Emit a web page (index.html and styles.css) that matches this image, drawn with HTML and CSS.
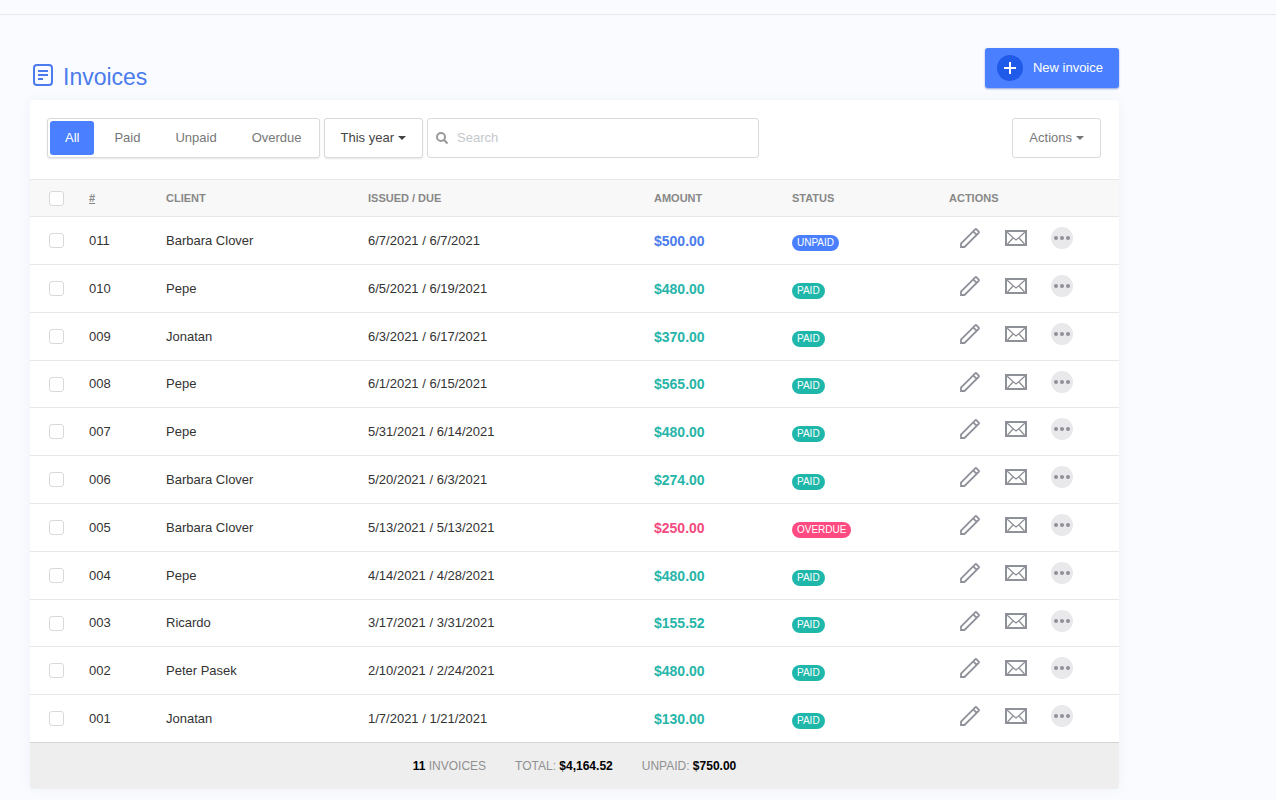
FILE: index.html
```html
<!DOCTYPE html>
<html lang="en">
<head>
<meta charset="utf-8">
<title>Invoices</title>
<link rel="stylesheet" href="styles.css">
</head>
<body>
<svg class="sprite" aria-hidden="true">
  <symbol id="i-pencil" viewBox="0 0 20 20">
    <path d="M1 19v-3.500L15.200 1.300a1 1 0 0 1 1.300 0L18.700 3.500a1 1 0 0 1 0 1.300L4.500 19zM13.200 3.300l3.500 3.500" fill="none" stroke="#8f9199" stroke-width="1.800"/>
  </symbol>
  <symbol id="i-mail" viewBox="0 0 22 16">
    <path d="M1 1h20v14H1z" fill="none" stroke="#8f9199" stroke-width="2"/>
    <path d="M2 2l6.500 6 2.500 2 2.500-2L20 2M2.500 14l5.500-6M19.500 14l-5.500-6" fill="none" stroke="#8f9199" stroke-width="1.300"/>
  </symbol>
  <symbol id="i-more" viewBox="0 0 22 22">
    <circle cx="11" cy="11" r="11" fill="#e9e9eb"/>
    <g fill="#8f9199"><circle cx="5" cy="11" r="2"/><circle cx="11" cy="11" r="2"/><circle cx="17" cy="11" r="2"/></g>
  </symbol>
</svg>
<header class="topbar"></header>
<main class="page">
  <div class="heading">
    <h1 class="title">
      <svg class="title-icon" viewBox="0 0 20 22" fill="none" stroke="#4b7bec" stroke-width="2" aria-hidden="true"><rect x="1" y="1" width="18" height="20" rx="3"/><path d="M5 7h10M5 11h10M5 15h5"/></svg>
      Invoices
    </h1>
    <button class="new-btn" type="button">
      <svg class="plus" viewBox="0 0 26 26" aria-hidden="true"><circle cx="13" cy="13" r="13" fill="#1f5ae8"/><path d="M13 7v12M7 13h12" stroke="#fff" stroke-width="2"/></svg>
      New invoice
    </button>
  </div>
  <section class="card">
    <div class="toolbar">
      <div class="tabs">
        <button class="tab tab-active" type="button">All</button>
        <button class="tab" type="button">Paid</button>
        <button class="tab" type="button">Unpaid</button>
        <button class="tab" type="button">Overdue</button>
      </div>
      <button class="drop drop-year" type="button">This year<span class="caret"></span></button>
      <label class="search">
        <svg class="search-icon" viewBox="0 0 12 12" fill="none" stroke="#999" stroke-width="2" aria-hidden="true"><circle cx="5" cy="5" r="4"/><path d="m8 8 3.500 3.500"/></svg>
        <input class="search-input" type="search" placeholder="Search" aria-label="Search">
      </label>
      <button class="drop drop-actions" type="button">Actions<span class="caret"></span></button>
    </div>
    <table class="invoices">
      <colgroup><col class="c-check"><col class="c-num"><col class="c-client"><col class="c-dates"><col class="c-amount"><col class="c-status"><col class="c-actions"></colgroup>
      <thead>
        <tr><th><input class="check" type="checkbox" aria-label="Select all"></th><th><a class="sort" href="#">#</a></th><th>CLIENT</th><th>ISSUED / DUE</th><th>AMOUNT</th><th>STATUS</th><th>ACTIONS</th></tr>
      </thead>
      <tbody id="rows"></tbody>
    </table>
    <footer class="summary">
      <span><b>11</b> INVOICES</span>
      <span>TOTAL: <b>$4,164.52</b></span>
      <span>UNPAID: <b>$750.00</b></span>
    </footer>
  </section>
</main>
<script src="rows.js"></script>
</body>
</html>
```
FILE: styles.css
```css
* { box-sizing: border-box; }
body { margin: 0; background: #f9fbff; color: #333; font: 13px/16px "Liberation Sans", Arial, sans-serif; }
button, input { font: inherit; }
button { cursor: pointer; }
.sprite { display: none; }
.topbar { height: 15px; border-bottom: 1px solid #e6e8ec; }
.page { margin: 33px 157px 12px 30px; }
.heading { display: flex; justify-content: space-between; align-items: flex-start; height: 52px; }
.title { display: flex; align-items: center; gap: 10px; margin: 14px 0 0 3px; color: #4b7bec; font-size: 23px; font-weight: 400; line-height: 30px; }
.title-icon { width: 20px; height: 22px; margin-bottom: 4px; }
.new-btn { display: flex; align-items: center; gap: 10px; height: 40px; padding: 0 16px 0 12px; border: 0; border-radius: 3px; background: #4a7fff; color: #fff; box-shadow: 0 1px 2px rgba(40, 80, 180, .5); }
.plus { width: 26px; height: 26px; }
.card { border-radius: 3px; background: #fff; box-shadow: 0 0 12px rgba(60, 70, 100, .05); }
.toolbar { display: flex; padding: 18px 18px 21px 17px; }
.tabs { display: flex; gap: 5px; height: 40px; padding: 2px; border: 1px solid #d9dadc; border-radius: 3px; box-shadow: 0 1px 2px rgba(0, 0, 0, .1); }
.tab { padding: 0 15px; border: 0; border-radius: 3px; background: none; color: #777; }
.tab-active { background: #4a7fff; color: #fff; }
.drop { display: flex; align-items: center; gap: 4px; height: 40px; padding: 0 16px; border: 1px solid #d9dadc; border-radius: 3px; background: #fff; color: #444; }
.drop-year { margin: 0 4px; box-shadow: 0 1px 2px rgba(0, 0, 0, .1); }
.drop-actions { margin-left: auto; color: #777; }
.caret { border: 4px solid transparent; border-top-color: currentColor; border-bottom: 0; }
.search { display: flex; align-items: center; flex: 0 1 332px; gap: 9px; height: 40px; padding: 0 8px; border: 1px solid #d9dadc; border-radius: 3px; }
.search-icon { flex: none; width: 12px; height: 12px; }
.search-input { flex: 1; min-width: 0; padding: 0; border: 0; outline: 0; background: none; }
.search-input::placeholder { color: #c4c8cc; }
.invoices { width: 100%; table-layout: fixed; border-collapse: collapse; }
.c-check { width: 59px; }
.c-num { width: 77px; }
.c-client { width: 202px; }
.c-dates { width: 286px; }
.c-amount { width: 138px; }
.c-status { width: 157px; }
.c-actions { width: 170px; }
.invoices th { height: 37px; padding: 0; border-top: 1px solid #e8e8ea; border-bottom: 1px solid #e8e8ea; background: #f8f8f8; color: #888; font-size: 11px; text-align: left; }
.invoices td { height: 48px; padding: 0; border-bottom: 1px solid #e8e8ea; }
.invoices tr:nth-child(5n+4) td { height: 47px; }
.invoices tr:last-child td { border-bottom-color: #d4d4d4; }
.invoices th:first-child, .invoices td:first-child { padding-left: 19px; }
.sort { color: inherit; }
.check { display: block; appearance: none; width: 15px; height: 15px; margin: 0; border: 1px solid #d9d9db; border-radius: 3px; background: #fff; }
.amount { font-size: 14px; font-weight: 700; }
.amount-paid { color: #26b5a9; }
.amount-unpaid { color: #4b7bec; }
.amount-overdue { color: #f24b80; }
.badge { display: inline-block; margin-top: 4px; padding: 0 5px; border-radius: 8px; color: #fff; font-size: 10px; line-height: 16px; vertical-align: middle; }
.badge-paid { background: #20b7ab; }
.badge-unpaid { background: #4a7fff; }
.badge-overdue { background: #ff4b81; }
.actions { display: flex; align-items: center; padding: 0 0 5px 10px; gap: 24px; }
.act { display: flex; padding: 0; border: 0; background: none; }
.act-icon { width: 22px; height: 22px; }
.act-pencil { width: 22px; height: 20px; }
.act-mail { height: 16px; }
.summary { display: flex; justify-content: center; gap: 29px; padding: 15px 0 15px; border-radius: 0 0 3px 3px; background: #eee; color: #909090; font-size: 12px; }
.summary b { color: #000; }
```
FILE: rows.js
```js
const invoices = [
  ["011", "Barbara Clover", "6/7/2021 / 6/7/2021", "$500.00", "unpaid"],
  ["010", "Pepe", "6/5/2021 / 6/19/2021", "$480.00", "paid"],
  ["009", "Jonatan", "6/3/2021 / 6/17/2021", "$370.00", "paid"],
  ["008", "Pepe", "6/1/2021 / 6/15/2021", "$565.00", "paid"],
  ["007", "Pepe", "5/31/2021 / 6/14/2021", "$480.00", "paid"],
  ["006", "Barbara Clover", "5/20/2021 / 6/3/2021", "$274.00", "paid"],
  ["005", "Barbara Clover", "5/13/2021 / 5/13/2021", "$250.00", "overdue"],
  ["004", "Pepe", "4/14/2021 / 4/28/2021", "$480.00", "paid"],
  ["003", "Ricardo", "3/17/2021 / 3/31/2021", "$155.52", "paid"],
  ["002", "Peter Pasek", "2/10/2021 / 2/24/2021", "$480.00", "paid"],
  ["001", "Jonatan", "1/7/2021 / 1/21/2021", "$130.00", "paid"]
];

document.getElementById("rows").innerHTML = invoices.map(([num, client, dates, amount, status]) => `
  <tr>
    <td><input class="check" type="checkbox" aria-label="Select invoice ${num}"></td>
    <td>${num}</td>
    <td>${client}</td>
    <td>${dates}</td>
    <td class="amount amount-${status}">${amount}</td>
    <td><span class="badge badge-${status}">${status.toUpperCase()}</span></td>
    <td><div class="actions">
      <button class="act" type="button" aria-label="Edit"><svg class="act-icon act-pencil"><use href="#i-pencil"/></svg></button>
      <button class="act" type="button" aria-label="Send"><svg class="act-icon act-mail"><use href="#i-mail"/></svg></button>
      <button class="act" type="button" aria-label="More"><svg class="act-icon"><use href="#i-more"/></svg></button>
    </div></td>
  </tr>`).join("");
```
